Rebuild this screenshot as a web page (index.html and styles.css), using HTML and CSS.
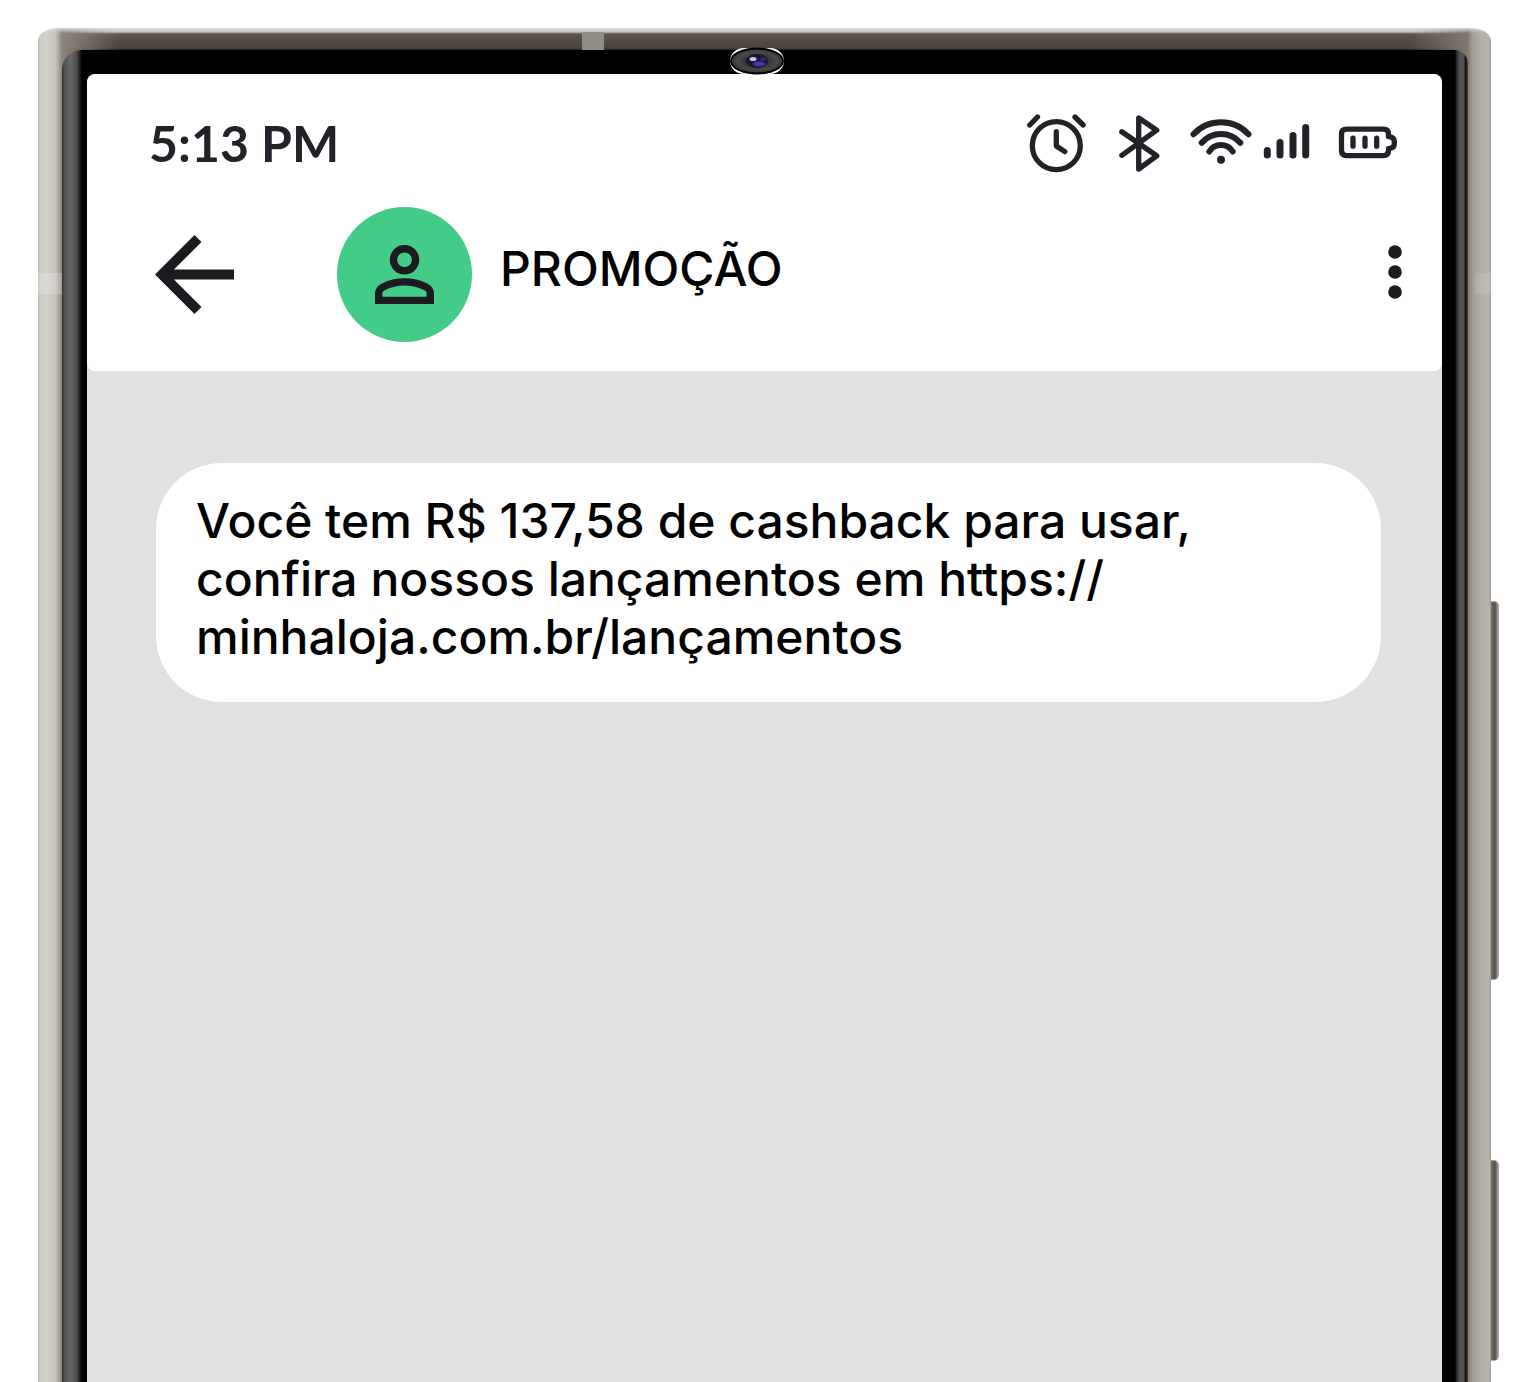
FILE: index.html
```html
<!DOCTYPE html>
<html lang="pt-BR">
<head>
    <meta charset="UTF-8">
    <meta name="viewport" content="width=device-width, initial-scale=1.0">
    <title>Promoção</title>
    <link rel="stylesheet" href="styles.css">
</head>
<body>

<div class="phone">
    <span class="antenna antenna-top"></span>
    <span class="antenna antenna-left"></span>
    <span class="antenna antenna-right"></span>
    <span class="side-button volume"></span>
    <span class="side-button power"></span>

    <div class="bezel">
        <div class="camera">
            <svg viewBox="0 0 56 28">
                <defs>
                    <radialGradient id="lens">
                        <stop offset="0" stop-color="#18142e"/>
                        <stop offset=".4" stop-color="#303032"/>
                        <stop offset=".8" stop-color="#4a4a4a"/>
                        <stop offset="1" stop-color="#333"/>
                    </radialGradient>
                </defs>
                <rect x="1" y="1" width="54" height="26" rx="14" fill="#fff"/>
                <ellipse cx="28" cy="14" rx="27" ry="13.5" fill="#000"/>
                <ellipse cx="28" cy="14" rx="25" ry="11.5" fill="url(#lens)"/>
                <ellipse cx="28" cy="14" rx="11" ry="7" fill="#1c1730"/>
                <ellipse cx="30" cy="17" rx="6" ry="2.5" fill="#4638a8"/>
                <ellipse cx="34" cy="12" rx="3" ry="2" fill="#2c2a66"/>
                <ellipse cx="24" cy="12" rx="3.5" ry="2" fill="#cbb8f5"/>
            </svg>
        </div>

        <div class="screen">
            <header class="header">
                <div class="status">
                    <span class="time">5:13 PM</span>
                    <div class="status-icons">
                        <svg class="line" width="64" height="64" viewBox="0 0 64 64">
                            <circle cx="30.3" cy="34.7" r="24"/>
                            <path d="M30.3 20.7V35l8.5 5.6M3.8 14L11.5 6M49 6L57.2 14"/>
                        </svg>
                        <svg class="line" width="44" height="64" viewBox="0 0 44 64">
                            <path d="M3.8 44.3L38.7 19.2 20.7 7v51l18-13.2L3.8 20.7"/>
                        </svg>
                        <div class="network">
                            <svg class="line wifi" width="62" height="64" viewBox="0 0 62 64">
                                <path d="M3.5 23.3a37.5 37.5 0 0 1 55 0M11.7 31.7a25.8 25.8 0 0 1 38.6 0M19.3 40.5a13.9 13.9 0 0 1 23.4 0"/>
                                <circle class="dot" cx="31" cy="48.7" r="4"/>
                            </svg>
                            <svg width="48" height="64" viewBox="0 0 48 64">
                                <rect x="1.8" y="36" width="7" height="11.5" rx="3.5"/>
                                <rect x="14.5" y="28" width="7" height="19.5" rx="3.5"/>
                                <rect x="27.5" y="21" width="7" height="26.5" rx="3.5"/>
                                <rect x="40.2" y="13" width="7" height="34.5" rx="3.5"/>
                            </svg>
                        </div>
                        <svg class="line" width="60" height="64" viewBox="0 0 60 64">
                            <path d="M8.5 18.1H45.5Q50.5 18.1 50.5 23.1V25.6H51.5Q56.3 26.5 56.3 30V33Q56.3 36.7 51.5 37.6H50.5V39.5Q50.5 44.6 45.5 44.6H8.5Q3.5 44.6 3.5 39.5V23.1Q3.5 18.1 8.5 18.1Z"/>
                            <path d="M15 27.2v8M27 27.2v8M38.7 27.2v8"/>
                        </svg>
                    </div>
                </div>

                <div class="contact">
                    <button class="icon-button" type="button" aria-label="Voltar">
                        <svg width="79" height="79" viewBox="4 4 16 16">
                            <path d="M7.825 13l5.6 5.6L12 20l-8-8 8-8 1.425 1.4-5.6 5.6H20v2z"/>
                        </svg>
                    </button>
                    <div class="avatar">
                        <svg width="59" height="59" viewBox="4 4 16 16">
                            <circle cx="12" cy="8" r="3" fill="none" stroke="#1d1b20" stroke-width="2"/>
                            <path fill-rule="evenodd" d="M4 20v-2.8q0-.85.438-1.563T5.6 14.55q1.55-.775 3.15-1.163T12 13t3.25.388 3.15 1.162q.725.375 1.163 1.088T20 17.2V20zm2-2h12v-.8q0-.275-.137-.5t-.363-.35q-1.35-.675-2.725-1.012T12 15t-2.775.338T6.5 16.35q-.225.125-.363.35T6 17.2z"/>
                        </svg>
                    </div>
                    <h1>PROMOÇÃO</h1>
                    <button class="icon-button" type="button" aria-label="Mais opções">
                        <svg width="14" height="60" viewBox="0 0 14 60">
                            <circle cx="7" cy="7" r="6.8"/>
                            <circle cx="7" cy="27" r="6.8"/>
                            <circle cx="7" cy="47" r="6.8"/>
                        </svg>
                    </button>
                </div>
            </header>

            <main class="messages">
                <p class="bubble">Você tem R$ 137,58 de cashback para usar, confira nossos lançamentos em https://<wbr>minhaloja.com.br/lançamentos</p>
            </main>
        </div>
    </div>
</div>

</body>
</html>
```
FILE: styles.css
```css
* {
    box-sizing: border-box;
}
body {
    display: flex;
    min-height: 100vh;
    margin: 0;
    padding: 28px 41px 0 38px;
    background-color: #fff;
    color: #000;
    font-family: Inter, "Liberation Sans", sans-serif;
    font-optical-sizing: none;
}
svg {
    display: block;
    fill: #1d1b20;
}

/* Carcaça */
.phone {
    position: relative;
    display: flex;
    flex: 1;
    padding: 22px 23px 0 24px;
    border-radius: 20px 20px 0 0 / 13px 13px 0 0;
    background:
        linear-gradient(#d9d8d4, rgba(217, 216, 212, 0)) top / 100% 5px no-repeat,
        linear-gradient(to right, #b5b6b7 0, #cfccc7 2px, #d4d1cc 8px, #c4c0b9 18px, #8d867d 24px, rgba(90, 83, 74, 0) 80px) left / 80px 100% no-repeat,
        linear-gradient(to left, #9c9a97 0, #b8b4ae 2px, #b3aea7 10px, #a29b92 19px, #80796f 23px, rgba(90, 83, 74, 0) 80px) right / 80px 100% no-repeat,
        linear-gradient(#d9d8d4 0, #bfbcb5 4px, #5b554c 6px, #4b453d 20px, #24211d 22px);
}
.bezel {
    position: relative;
    display: flex;
    flex: 1;
    padding: 24px 26px 0 25px;
    border-radius: 20px 14px 0 0;
    background:
        linear-gradient(to right, #37332e 0, #555 3px, #666 9px, #4b4b4b 15px, #1c1c1c 18px, #000 20px) left / 24px 100% no-repeat,
        linear-gradient(to left, #4d473f 0, #111 2px, #1a1a1a 3px, #505050 4px, #555 8px, #333 11px, #000 13px) right / 24px 100% no-repeat,
        #000;
}
.camera {
    position: absolute;
    top: -3px;
    left: calc(50% - 36px);
    width: 56px;
    height: 28px;
}
.antenna {
    position: absolute;
    background-color: rgba(255, 255, 255, 0.2);
}
.antenna-top {
    top: 4px;
    left: 544px;
    width: 22px;
    height: 18px;
    background-color: #928d84;
}
.antenna-left {
    top: 245px;
    left: 0;
    width: 24px;
    height: 21px;
}
.antenna-right {
    top: 245px;
    right: 0;
    width: 16px;
    height: 21px;
    background-color: rgba(255, 255, 255, 0.1);
}
.side-button {
    position: absolute;
    left: 100%;
    width: 8px;
    border: 1px solid #aaa49c;
    border-left: none;
    border-radius: 0 5px 5px 0;
    background: linear-gradient(to right, #797168, #574e44 4px, #a39c94);
}
.volume {
    top: 573px;
    height: 379px;
}
.power {
    top: 1132px;
    height: 201px;
}

/* Tela */
.screen {
    flex: 1;
    border-radius: 8px 8px 0 0;
    background-color: #e1e1e1;
    overflow: hidden;
}
.header {
    padding: 37px 39px 29px 62px;
    border-radius: 8px;
    background-color: #fff;
}
.status {
    display: flex;
    justify-content: space-between;
    align-items: center;
    padding-right: 5px;
}
.time {
    color: #232228;
    font-family: Lato, "Liberation Sans", sans-serif;
    font-size: 50px;
    font-weight: 700;
    line-height: 64px;
}
.status-icons {
    display: flex;
    gap: 28px;
}
.status-icons svg {
    fill: #232228;
}
.network {
    display: flex;
    gap: 10px;
}
.status-icons .line {
    fill: none;
    stroke: #232228;
    stroke-width: 5.3;
    stroke-linecap: round;
    stroke-linejoin: round;
}
.status-icons .wifi {
    stroke-width: 6;
}
.wifi .dot {
    fill: #232228;
    stroke: none;
}
.contact {
    display: flex;
    align-items: center;
    margin-top: 32px;
}
.icon-button {
    padding: 0 6px;
    border: none;
    background: none;
    cursor: pointer;
}
.contact .icon-button:last-child {
    padding: 0 1px;
}
.avatar {
    display: flex;
    justify-content: center;
    align-items: center;
    width: 135px;
    height: 135px;
    margin: 0 28px 0 97px;
    border-radius: 50%;
    background-color: #42cc88;
}
h1 {
    flex: 1;
    margin: 0;
    padding-bottom: 12px;
    font-size: 48px;
    font-weight: 500;
    line-height: 58px;
}
.messages {
    padding: 92px 61px 92px 69px;
}
.bubble {
    margin: 0;
    padding: 29px 40px 36px;
    border-radius: 66px;
    background-color: #fff;
    font-size: 48px;
    font-weight: 500;
    line-height: 58px;
}
```
